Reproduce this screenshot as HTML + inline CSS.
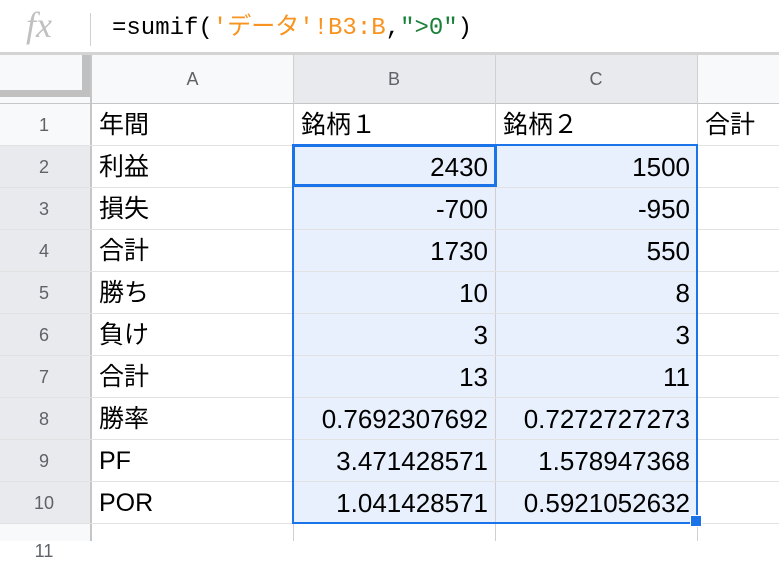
<!DOCTYPE html>
<html><head><meta charset="utf-8"><style>
body{margin:0;width:779px;height:541px;overflow:hidden;background:#fff;position:relative;font-family:"Liberation Sans","Noto Sans CJK JP",sans-serif}
div{position:absolute;box-sizing:border-box}
.t{font-size:25px;color:#000;line-height:42px;white-space:nowrap}
.r{text-align:right;font-size:26px}
.h{font-size:18px;color:#5f6368;text-align:center}
.vl{width:1px;background:#e2e2e2}
.hl{height:1px;background:#e2e2e2}
</style></head><body>
<div style="left:0;top:0;width:779px;height:53px;background:#fff"></div>
<div style="left:26px;top:5px;font-family:'Liberation Serif',serif;font-style:italic;font-size:36px;color:#c0c0c0;line-height:40px">fx</div>
<div style="left:90px;top:13px;width:1px;height:33px;background:#d0d0d0"></div>
<div style="left:112px;top:11px;font-family:'Liberation Mono','Noto Sans CJK JP',monospace;font-size:24px;line-height:36px;color:#000;white-space:nowrap">=sumif(<span style="color:#f7931e">'データ'!B3:B</span>,<span style="color:#188038">"&gt;0"</span>)</div>
<div style="left:0;top:52px;width:779px;height:3px;background:#d4d4d4"></div>
<div style="left:0;top:55px;width:779px;height:49px;background:#f8f9fa"></div>
<div style="left:293px;top:55px;width:404px;height:49px;background:#e8eaed"></div>
<div style="left:0;top:104px;width:90px;height:420px;background:#f8f9fa"></div>
<div style="left:0;top:146px;width:90px;height:378px;background:#e8eaed"></div>
<div style="left:0;top:524px;width:90px;height:17px;background:#f8f9fa"></div>
<div style="left:82px;top:55px;width:8px;height:42px;background:#c0c0c0"></div>
<div style="left:0;top:90px;width:90px;height:7px;background:#c0c0c0"></div>
<div style="left:90px;top:55px;width:2px;height:486px;background:#c6c6c6"></div>
<div style="left:0;top:103px;width:779px;height:1px;background:#c6c6c6"></div>
<div class="h" style="left:92px;top:55px;width:201px;line-height:48px">A</div>
<div class="h" style="left:293px;top:55px;width:202px;line-height:48px">B</div>
<div class="h" style="left:495px;top:55px;width:202px;line-height:48px">C</div>
<div style="left:293px;top:146px;width:404px;height:378px;background:#e7f0fc"></div>
<div class="vl" style="left:293px;top:55px;height:486px;background:#d0d0d0"></div>
<div class="vl" style="left:495px;top:55px;height:486px;background:#d0d0d0"></div>
<div class="vl" style="left:697px;top:55px;height:486px;background:#d0d0d0"></div>
<div class="hl" style="left:0;top:145px;width:779px"></div>
<div class="hl" style="left:0;top:187px;width:779px"></div>
<div class="hl" style="left:0;top:229px;width:779px"></div>
<div class="hl" style="left:0;top:271px;width:779px"></div>
<div class="hl" style="left:0;top:313px;width:779px"></div>
<div class="hl" style="left:0;top:355px;width:779px"></div>
<div class="hl" style="left:0;top:397px;width:779px"></div>
<div class="hl" style="left:0;top:439px;width:779px"></div>
<div class="hl" style="left:0;top:481px;width:779px"></div>
<div class="hl" style="left:0;top:523px;width:779px"></div>
<div class="h" style="left:0;top:104px;width:88px;line-height:42px">1</div>
<div class="h" style="left:0;top:146px;width:88px;line-height:42px">2</div>
<div class="h" style="left:0;top:188px;width:88px;line-height:42px">3</div>
<div class="h" style="left:0;top:230px;width:88px;line-height:42px">4</div>
<div class="h" style="left:0;top:272px;width:88px;line-height:42px">5</div>
<div class="h" style="left:0;top:314px;width:88px;line-height:42px">6</div>
<div class="h" style="left:0;top:356px;width:88px;line-height:42px">7</div>
<div class="h" style="left:0;top:398px;width:88px;line-height:42px">8</div>
<div class="h" style="left:0;top:440px;width:88px;line-height:42px">9</div>
<div class="h" style="left:0;top:482px;width:88px;line-height:42px">10</div>
<div class="h" style="left:0;top:530px;width:88px;line-height:42px">11</div>
<div class="t" style="left:99px;top:104px">年間</div>
<div class="t" style="left:99px;top:146px">利益</div>
<div class="t" style="left:99px;top:188px">損失</div>
<div class="t" style="left:99px;top:230px">合計</div>
<div class="t" style="left:99px;top:272px">勝ち</div>
<div class="t" style="left:99px;top:314px">負け</div>
<div class="t" style="left:99px;top:356px">合計</div>
<div class="t" style="left:99px;top:398px">勝率</div>
<div class="t" style="left:99px;top:440px">PF</div>
<div class="t" style="left:99px;top:482px">POR</div>
<div class="t" style="left:301px;top:104px">銘柄１</div>
<div class="t" style="left:503px;top:104px">銘柄２</div>
<div class="t" style="left:705px;top:104px">合計</div>
<div class="t r" style="left:293px;top:146px;width:195px">2430</div>
<div class="t r" style="left:293px;top:188px;width:195px">-700</div>
<div class="t r" style="left:293px;top:230px;width:195px">1730</div>
<div class="t r" style="left:293px;top:272px;width:195px">10</div>
<div class="t r" style="left:293px;top:314px;width:195px">3</div>
<div class="t r" style="left:293px;top:356px;width:195px">13</div>
<div class="t r" style="left:293px;top:398px;width:195px">0.7692307692</div>
<div class="t r" style="left:293px;top:440px;width:195px">3.471428571</div>
<div class="t r" style="left:293px;top:482px;width:195px">1.041428571</div>
<div class="t r" style="left:495px;top:146px;width:195px">1500</div>
<div class="t r" style="left:495px;top:188px;width:195px">-950</div>
<div class="t r" style="left:495px;top:230px;width:195px">550</div>
<div class="t r" style="left:495px;top:272px;width:195px">8</div>
<div class="t r" style="left:495px;top:314px;width:195px">3</div>
<div class="t r" style="left:495px;top:356px;width:195px">11</div>
<div class="t r" style="left:495px;top:398px;width:195px">0.7272727273</div>
<div class="t r" style="left:495px;top:440px;width:195px">1.578947368</div>
<div class="t r" style="left:495px;top:482px;width:195px">0.5921052632</div>
<div style="left:292px;top:144px;width:406px;height:380px;border:2px solid #1a73e8"></div>
<div style="left:292px;top:144px;width:205px;height:43px;border:3px solid #1a73e8"></div>
<div style="left:690px;top:515px;width:12px;height:12px;background:#1a73e8;border:1px solid #fff"></div>
</body></html>
